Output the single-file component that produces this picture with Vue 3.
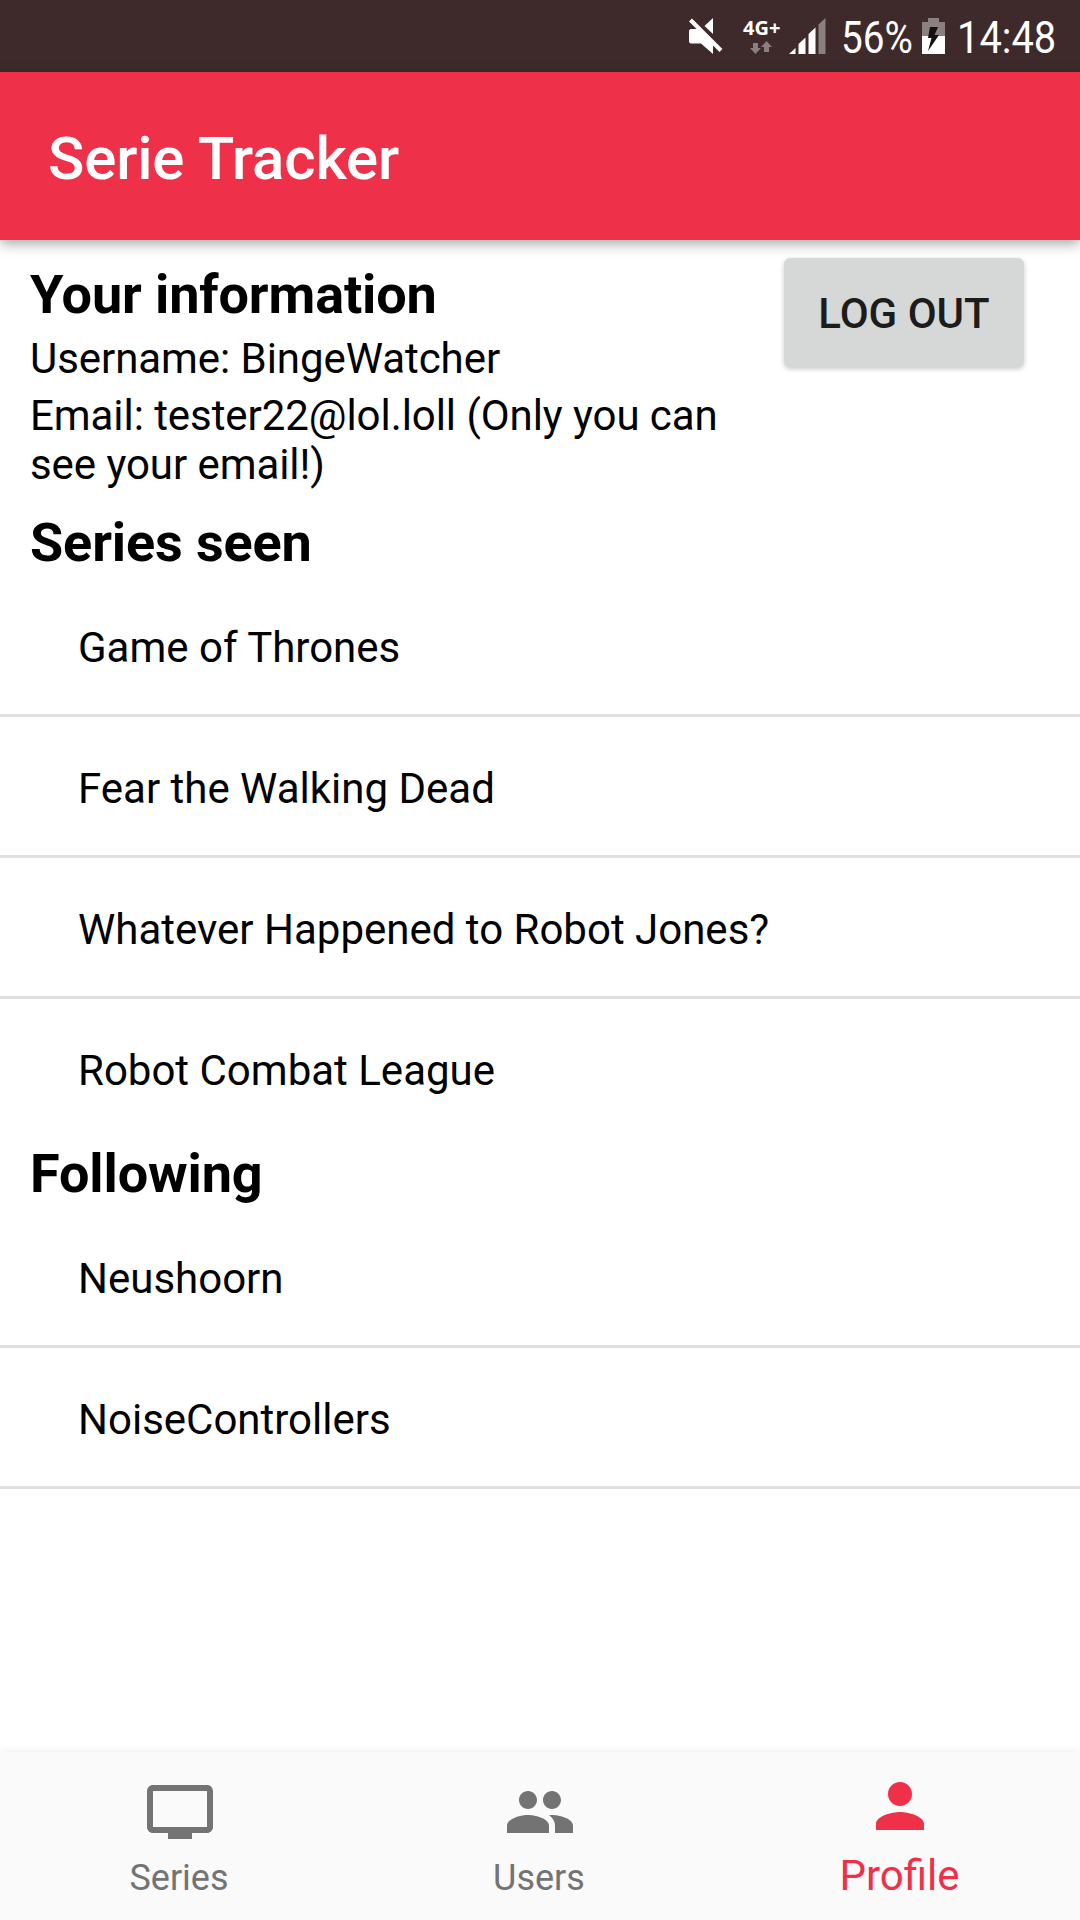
<script setup>
const info = ['Username: BingeWatcher', 'Email: tester22@lol.loll (Only you can see your email!)']
const series = ['Game of Thrones', 'Fear the Walking Dead', 'Whatever Happened to Robot Jones?', 'Robot Combat League']
const following = ['Neushoorn', 'NoiseControllers']
const tabs = [
  { label: 'Series', icon: 'M21 3H3c-1.1 0-2 .9-2 2v12c0 1.1.9 2 2 2h5v2h8v-2h5c1.1 0 2-.9 2-2V5c0-1.1-.9-2-2-2zm0 14H3V5h18v12z' },
  { label: 'Users', icon: 'M16 11c1.66 0 2.99-1.34 2.99-3S17.66 5 16 5c-1.66 0-3 1.34-3 3s1.34 3 3 3zm-8 0c1.66 0 2.99-1.34 2.99-3S9.66 5 8 5C6.34 5 5 6.34 5 8s1.34 3 3 3zm0 2c-2.33 0-7 1.17-7 3.5V19h14v-2.500c0-2.330-4.670-3.500-7-3.500zm8 0c-.29 0-.62.020-.97.050 1.160.840 1.970 1.970 1.970 3.450V19h6v-2.500c0-2.330-4.670-3.500-7-3.500z' },
  { label: 'Profile', active: true, icon: 'M12 12c2.210 0 4-1.790 4-4s-1.790-4-4-4-4 1.790-4 4 1.790 4 4 4zm0 2c-2.670 0-8 1.340-8 4v2h16v-2c0-2.660-5.330-4-8-4z' },
]
</script>

<template>
  <div class="screen">
    <div class="status">
      <svg class="mute" width="34" height="36" viewBox="0 0 34 36">
        <path d="M1.500 11H11L24 24V36L12 25.500H1.500L0 24V12.500zM15.500 8L24 0V16z" fill="#fff" />
        <path d="M1.500 2L32 32.500" stroke="#fff" stroke-width="4" />
      </svg>
      <div class="network">
        <span class="network-type">4G+</span>
        <svg width="22" height="13" viewBox="0 0 22 13" fill="#8b7f80">
          <path d="M3 2h5v5h3l-5.500 6L0 7h3zM14 11h5V6h3L16.500 0 11 6h3z" />
        </svg>
      </div>
      <svg class="signal" width="37" height="36" viewBox="0 0 37 36">
        <path d="M0 36L6.500 30V36zM9.500 36V26L16.500 19.500V36zM19.500 36V16L26.500 9.500V36z" fill="#fff" />
        <path d="M29.500 36V6.500L36.500 0V36z" fill="#8b7f80" />
      </svg>
      <div class="percent"><span>56%</span></div>
      <svg class="battery" width="24" height="36" viewBox="0 0 24 36">
        <path d="M6 0H17V4H23V18H0V4H6z" fill="#8b7f80" />
        <path d="M0 18H23V36H0z" fill="#fff" />
        <path d="M8 9H16L12.500 17H17L6 33L9.500 20H6z" fill="#151111" />
      </svg>
      <div class="clock"><span>14:48</span></div>
    </div>

    <header class="appbar"><h1>Serie Tracker</h1></header>

    <main class="content">
      <section class="profile">
        <div class="details">
          <h2>Your information</h2>
          <p v-for="line in info" :key="line">{{ line }}</p>
        </div>
        <button class="logout">LOG OUT</button>
      </section>
      <h2>Series seen</h2>
      <ul class="inner">
        <li v-for="s in series" :key="s">{{ s }}</li>
      </ul>
      <h2>Following</h2>
      <ul>
        <li v-for="f in following" :key="f">{{ f }}</li>
      </ul>
    </main>

    <nav class="tabs">
      <div v-for="t in tabs" :key="t.label" class="tab" :class="{ active: t.active }">
        <svg width="72" height="72" viewBox="0 0 24 24"><path :d="t.icon" fill="currentColor" /></svg>
        <span>{{ t.label }}</span>
      </div>
    </nav>
  </div>
</template>

<style>
body { margin: 0; background: #fff; }
</style>

<style scoped>
* { box-sizing: border-box; }
.screen {
  width: 1080px;
  height: 1920px;
  display: flex;
  flex-direction: column;
  overflow: hidden;
  background: #fff;
  color: #000;
  font-family: Roboto, sans-serif;
}
h1, h2, p, ul { margin: 0; padding: 0; }
.status {
  flex: none;
  height: 72px;
  display: flex;
  align-items: center;
  padding-left: 689px;
  background: #3e2a2b;
  color: #fff;
}
.network {
  width: 40px;
  height: 36px;
  margin-left: 20px;
  display: flex;
  flex-direction: column;
  justify-content: space-between;
}
.network-type {
  font: 700 20px/20px "Noto Sans", sans-serif;
}
.network svg { margin-left: 7px; flex: none; }
.signal { margin-left: 6px; }
.percent, .clock {
  padding-top: 3px;
  font-size: 45px;
  line-height: 60px;
  white-space: nowrap;
}
.percent { width: 71px; margin-left: 15px; }
.clock { width: 100px; margin-left: 11px; }
.percent span, .clock span {
  display: inline-block;
  transform: scaleX(0.86);
  transform-origin: left;
}
.clock span { transform: scaleX(0.885); }
.battery { margin-left: 10px; }
.appbar {
  flex: none;
  height: 168px;
  padding: 3px 0 0 48px;
  background: #ee3048;
  box-shadow: 0 4px 12px rgba(0, 0, 0, 0.34);
  color: #fff;
  z-index: 1;
}
h1 {
  font-size: 60px;
  font-weight: 500;
  line-height: 168px;
  letter-spacing: -0.15px;
}
.content { flex: 1; }
.profile {
  display: flex;
  height: 266px;
  padding-top: 18px;
}
.details { width: 784px; }
.details p {
  width: 740px;
  margin-bottom: 8px;
  padding-left: 30px;
  font-size: 42px;
  line-height: 49px;
  letter-spacing: -0.06px;
}
.details h2 { margin-bottom: 6px; }
h2 {
  height: 70px;
  padding: 3px 0 0 30px;
  font-size: 54px;
  font-weight: 700;
  line-height: 68px;
  letter-spacing: -0.13px;
}
.logout {
  width: 240px;
  height: 109px;
  padding: 3px 0 0;
  border: 0;
  border-radius: 6px;
  background: #d6d7d7;
  box-shadow: 0 2px 5px rgba(0, 0, 0, 0.22);
  color: #1c1c1c;
  font: 500 42px/106px Roboto, sans-serif;
}
ul { list-style: none; }
li {
  height: 141px;
  padding: 5px 0 0 78px;
  border-bottom: 3px solid #e0e0e0;
  font-size: 42px;
  line-height: 133px;
}
.inner li:last-child {
  height: 138px;
  border-bottom: 0;
}
.tabs {
  flex: none;
  height: 168px;
  display: flex;
  background: #fafafa;
  box-shadow: 0 0 8px rgba(0, 0, 0, 0.09);
  color: #737373;
}
.tab {
  flex: 1;
  padding-top: 24px;
  display: flex;
  flex-direction: column;
  align-items: center;
  font-size: 36px;
  line-height: 42px;
}
.tab span { margin: 9px 2px 0 0; }
.tab.active {
  padding-top: 18px;
  color: #ee3048;
  font-size: 42px;
  line-height: 49px;
}
.tab.active span { margin-right: 1px; }
</style>
